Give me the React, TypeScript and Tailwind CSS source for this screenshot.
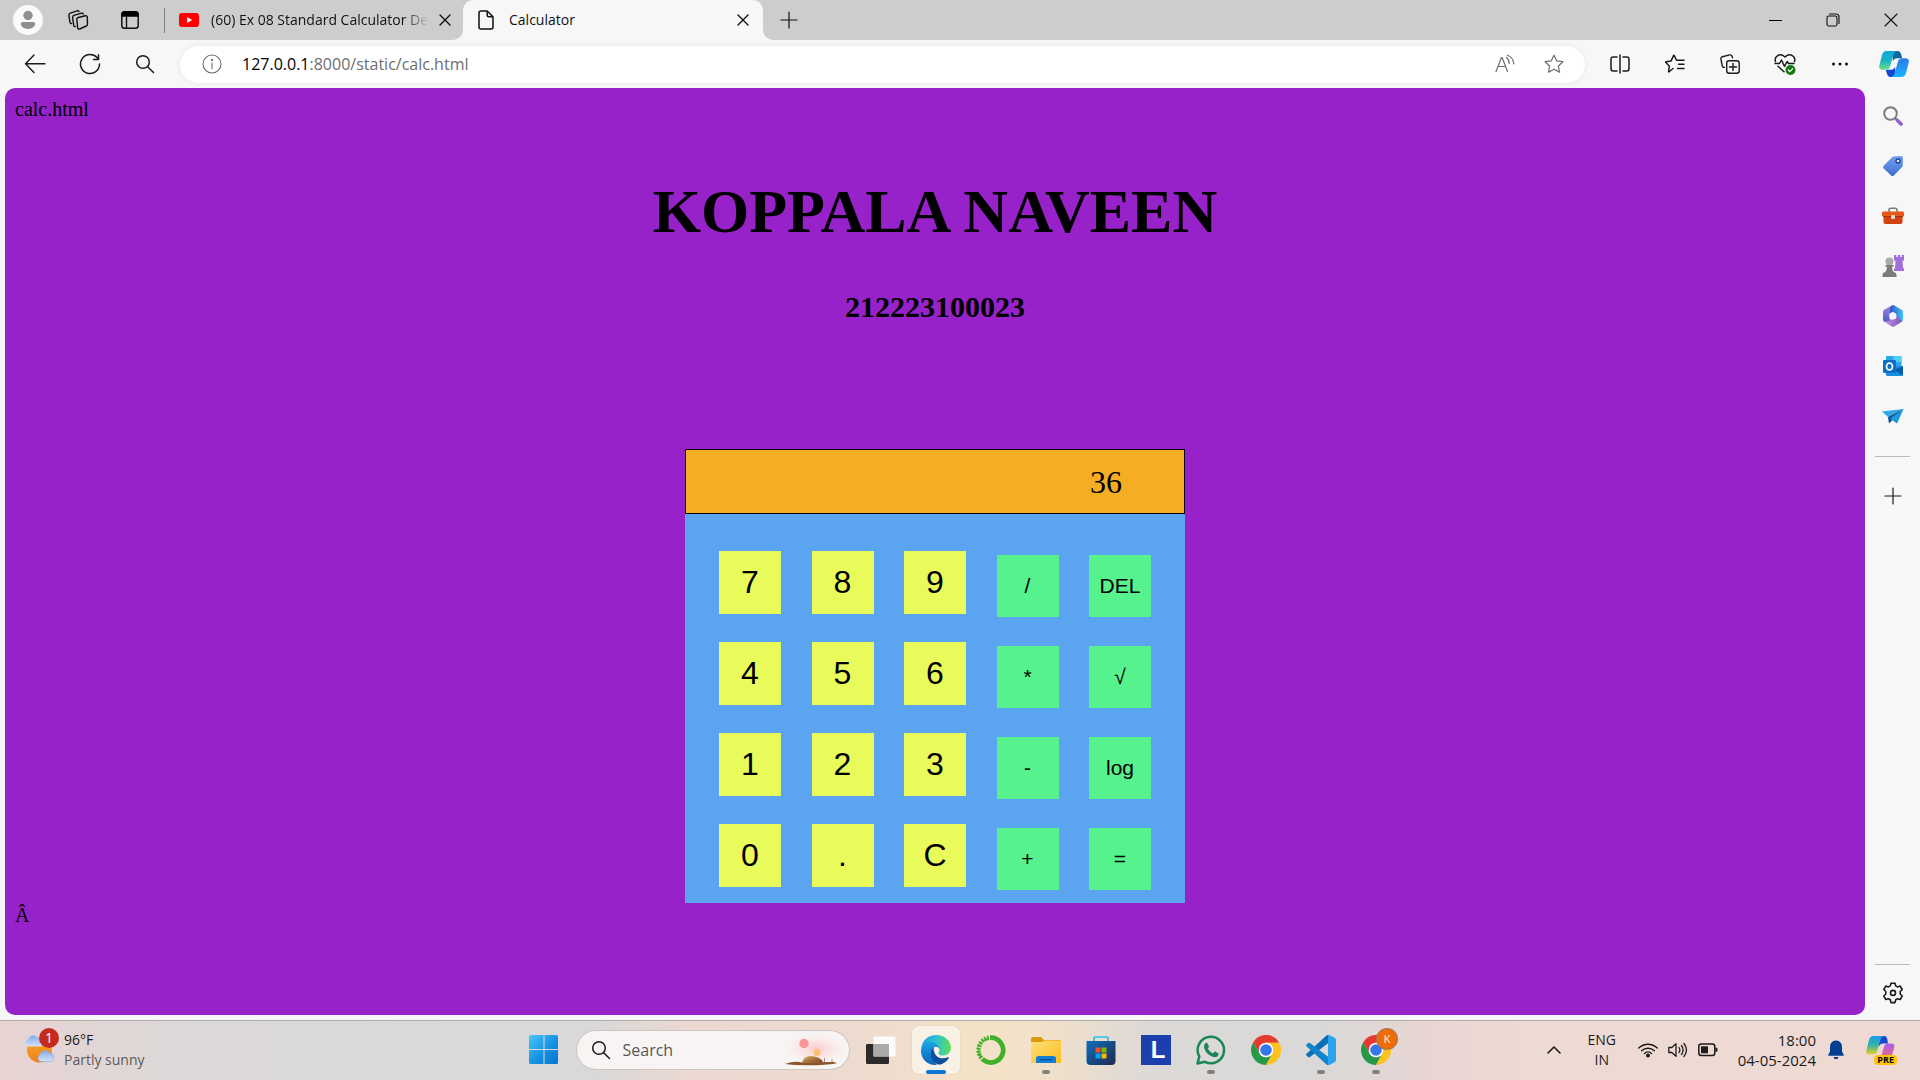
import type { ReactNode } from "react";

const line = {
  fill: "none",
  stroke: "currentColor",
  strokeLinecap: "round" as const,
  strokeLinejoin: "round" as const,
};

/* ---------- Browser icons ---------- */

const Avatar = () => (
  <svg className="h-[30px] w-[30px]" viewBox="0 0 30 30">
    <circle cx="15" cy="15" r="15" fill="#fafafa" />
    <circle cx="15" cy="10.5" r="4.7" fill="#8f8f8f" />
    <path d="M9.500 17h11q1.700 0 1.700 1.600c0 3.200-3.200 5.400-7.200 5.400s-7.200-2.200-7.200-5.400Q7.800 17 9.500 17z" fill="#8f8f8f" />
  </svg>
);

const Workspaces = () => (
  <svg className="h-[22px] w-[22px]" viewBox="0 0 22 22" {...line} strokeWidth="1.400">
    <path d="M10.500 8.800 18.300 6.800q1.900-.4 2 1.400l.2 7q0 1.300-1.200 1.800l-6.600 3q-1.700.6-2-1.100l-.9-8q-.1-1.600.7-2.100z" />
    <path d="M8.200 17.500q-1.200.3-1.500-1.100L5.600 8.600q-.1-1.700 1.300-2.200l7.500-2.200q1.500-.3 1.900.9" />
    <path d="M4.500 14.500q-1.200.2-1.500-1.100L1.900 6.300q-.1-1.700 1.300-2.200l7-2.200q1.300-.3 1.800.6" />
  </svg>
);

const TabActions = () => (
  <svg className="h-5 w-5" viewBox="0 0 20 20">
    <rect x="1.800" y="1.800" width="16.400" height="16.400" rx="2.800" fill="none" stroke="#111" strokeWidth="1.500" />
    <path d="M1.500 6.800V4A2.800 2.800 0 0 1 4.300 1.200h11.400A2.800 2.800 0 0 1 18.500 4v2.800z" fill="#000" />
    <path d="M6.500 6v12" stroke="#111" strokeWidth="1.400" />
  </svg>
);

const YouTube = () => (
  <svg className="h-[14px] w-5" viewBox="0 0 20 14">
    <rect width="20" height="14" rx="3.200" fill="#f00" />
    <path d="M8 4v6l5.200-3z" fill="#fff" />
  </svg>
);

const Cross = () => (
  <svg className="h-3 w-3" viewBox="0 0 12 12" {...line} strokeWidth="1.400">
    <path d="m1 1 10 10M11 1 1 11" />
  </svg>
);

const Doc = () => (
  <svg className="h-5 w-4" viewBox="0 0 16 20" {...line} strokeWidth="1.500">
    <path d="M2.800 1h6.400l5.800 5.800V17q0 2-2 2H3q-2 0-2-2V3q0-2 1.800-2zM9.200 1v4.300q0 1.500 1.500 1.500H15" />
  </svg>
);

const Plus = () => (
  <svg className="h-[18px] w-[18px]" viewBox="0 0 18 18" {...line} strokeWidth="1.200">
    <path d="M9 1v16M1 9h16" />
  </svg>
);

const Minimize = () => (
  <svg className="h-[14px] w-[14px]" viewBox="0 0 14 14" stroke="#000" strokeWidth="1">
    <path d="M0 7.500h13" />
  </svg>
);

const Restore = () => (
  <svg className="h-[14px] w-[14px]" viewBox="0 0 14 14" {...line} strokeWidth="1.100">
    <rect x="1" y="3" width="10" height="10" rx="1.800" />
    <path d="M3.500 1h6.500q3 0 3 3v6.500" />
  </svg>
);

const CloseWindow = () => (
  <svg className="h-[14px] w-[14px]" viewBox="0 0 14 14" {...line} strokeWidth="1.100">
    <path d="m1 1 12 12M13 1 1 13" />
  </svg>
);

const Back = () => (
  <svg className="h-[22px] w-[22px]" viewBox="0 0 22 22" {...line} strokeWidth="1.400">
    <path d="M10 2 1.500 10.700 10 19.500M1.500 10.700H21" />
  </svg>
);

const Reload = () => (
  <svg className="h-[22px] w-[22px]" viewBox="0 0 22 22" {...line} strokeWidth="1.500">
    <path d="M20.500 11A9.500 9.500 0 1 1 18 4.600l1.200 1.500M19.500 1.800V6.600h-5" />
  </svg>
);

const Magnifier = () => (
  <svg className="h-5 w-5" viewBox="0 0 20 20" {...line} strokeWidth="1.500">
    <circle cx="8" cy="8" r="6.300" />
    <path d="m12.700 12.700 5.800 5.800" />
  </svg>
);

const Info = () => (
  <svg className="h-5 w-5" viewBox="0 0 20 20" {...line} strokeWidth="1.100">
    <circle cx="10" cy="10" r="9" />
    <path d="M10 9v5.500" />
    <circle cx="10" cy="6" r=".6" fill="currentColor" />
  </svg>
);

const ReadAloud = () => (
  <svg className="h-5 w-5" viewBox="0 0 20 20" {...line} strokeWidth="1.200">
    <path d="m1 17.500 5.500-14h.6l5.400 14M3 12.500h7.500M11.500 3.500q2.700 2 2.800 6M12.500 1.200q5.800 2.300 6.300 8.600" />
  </svg>
);

const Star = () => (
  <svg className="h-5 w-5" viewBox="0 0 20 20" {...line} strokeWidth="1.200">
    <path d="m10 1.200 2.700 5.600 6.200.9-4.500 4.300 1.100 6.100L10 15.200l-5.500 2.900 1.100-6.100L1.100 7.700l6.200-.9z" />
  </svg>
);

const Split = () => (
  <svg className="h-5 w-5" viewBox="0 0 20 20" {...line} strokeWidth="1.500">
    <path d="M7 3H3.200Q1 3 1 5.200v9.600Q1 17 3.200 17H7M13 3h3.800Q19 3 19 5.200v9.600Q19 17 16.800 17H13M10 1v18" />
  </svg>
);

const Favorites = () => (
  <svg className="h-5 w-5" viewBox="0 0 20 20" {...line} strokeWidth="1.500">
    <path d="M8 14.500 3.800 18q-.3 0-.3-.4l.9-5.400-3.700-3.900q-.2-.5.300-.6l5.100-.8L8.500 1.600q.4-.6.800 0L11.500 6.300H19M13.500 10.300H19M12.500 14.500H19" />
  </svg>
);

const Collections = () => (
  <svg className="h-5 w-5" viewBox="0 0 20 20" {...line} strokeWidth="1.400">
    <rect x="6.700" y="6.700" width="12.500" height="12.500" rx="2.500" />
    <path d="M13 9.500v7M9.500 13h7M4.300 13.500q-1.700-.2-2-1.500L.9 5.200Q.6 3.300 2.400 2.700L9.600.9q1.800-.3 2.500 1.300l.4 1.500" />
  </svg>
);

const Health = () => (
  <svg className="h-[22px] w-[22px]" viewBox="0 0 22 22" {...line} strokeWidth="1.500">
    <path d="M1.500 8.500C0 4 5.500-1 11 4c5.500-5 11 0 9.500 4.500M1 10.500h4.500l2-3.500 3 6.500 2.500-5 1.500 2H20M4 13.200l6 5.500" />
    <circle cx="16.500" cy="17" r="5" fill="#107c10" stroke="none" />
    <path d="m14.300 17 1.600 1.600 2.800-3" stroke="#fff" strokeWidth="1.200" />
  </svg>
);

const Dots = () => (
  <svg className="h-5 w-5" viewBox="0 0 20 20" fill="#111">
    <circle cx="3.500" cy="10" r="1.500" />
    <circle cx="10" cy="10" r="1.500" />
    <circle cx="16.500" cy="10" r="1.500" />
  </svg>
);

const Copilot = () => (
  <svg className="h-[30px] w-[30px]" viewBox="0 0 30 30">
    <defs>
      <linearGradient id="cpA" x1="0" y1="0" x2="0" y2="1">
        <stop offset="0" stopColor="#12a7dd" />
        <stop offset=".5" stopColor="#19b3c4" />
        <stop offset="1" stopColor="#6be08a" />
      </linearGradient>
      <linearGradient id="cpB" x1="0" y1="0" x2="0" y2="1">
        <stop offset="0" stopColor="#2b79e8" />
        <stop offset="1" stopColor="#19b4ff" />
      </linearGradient>
    </defs>
    <path d="M13 2h5.500q2.700 0 3.500 3l1.200 4.200H18q-3 0-4 3z" fill="#0b6a9c" />
    <path d="M17 28h-5.500Q9 28 8 25l-1.200-4.200H12q3 0 4-3z" fill="#1447d4" />
    <path d="M7.500 2H18q-2.500.3-3.300 3l-3.700 12.500q-1 3.300-4.500 3.300H3.500Q-.5 20.800.3 16.500L3 6Q4.200 2 7.500 2z" fill="url(#cpA)" />
    <path d="M22.500 28H12q2.500-.3 3.300-3L19 12.500q1-3.300 4.500-3.300h3q4 0 3.200 4.300L27 24q-1.200 4-4.500 4z" fill="url(#cpB)" />
  </svg>
);

/* ---------- Sidebar icons ---------- */

const SideSearch = () => (
  <svg className="h-5 w-5" viewBox="0 0 20 20" fill="none">
    <circle cx="7.500" cy="7.500" r="6.300" stroke="#7c7c7c" strokeWidth="2" />
    <path d="m12 12 2 2" stroke="#777" strokeWidth="2" />
    <path d="m14.500 14.500 3.500 3.500" stroke="#9461cf" strokeWidth="3.600" strokeLinecap="round" />
  </svg>
);

const Tag = () => (
  <svg className="h-5 w-5" viewBox="0 0 20 20">
    <defs>
      <linearGradient id="tag" x1="0" y1="0" x2="0" y2="1">
        <stop offset="0" stopColor="#71a0f0" />
        <stop offset="1" stopColor="#3f6fcf" />
      </linearGradient>
    </defs>
    <path d="M10.500.5 18 0q2 0 2 2l-.3 7.500q0 1-.8 1.700l-8 8.200q-1.400 1.200-2.800 0L.7 12.500q-1.200-1.400 0-2.700L9 1.200q.7-.7 1.500-.7z" fill="url(#tag)" />
    <circle cx="15" cy="5" r="2" fill="#dfe9ff" stroke="#24418f" strokeWidth="1.300" />
  </svg>
);

const Toolbox = () => (
  <svg className="h-[18px] w-[22px]" viewBox="0 0 22 18">
    <path d="M7 5V3q0-1.700 1.700-1.700h4.600Q15 1.300 15 3v2" fill="none" stroke="#7b7b7b" strokeWidth="1.600" />
    <path d="M1.500 9h19v6q0 2-2 2h-15q-2 0-2-2z" fill="#d3430f" />
    <rect y="4.500" width="22" height="5" rx="1.200" fill="#e8571b" />
    <path d="M1 9.500h20" stroke="#a6320a" />
    <rect x="9" y="8" width="4" height="4" rx="1" fill="#d9d9d9" />
  </svg>
);

const Chess = () => (
  <svg className="h-[22px] w-[22px]" viewBox="0 0 22 22">
    <path d="M12 0h2.300v2h1.600V0h2.300v2h1.500V0H22v5l-1.500 1.500.6 6.500.9 1v2H12v-2l1-1 .6-6.500L12 5z" fill="#a270dc" />
    <circle cx="7.500" cy="6.500" r="4" fill="#a9a9a9" />
    <path d="M3.500 10h8v1.800H10q0 3.700 1.800 5.200Q14.500 17.500 14.500 20v2H.5v-2q0-2.500 2.700-3Q5 15.500 5 11.800H3.500z" fill="#7c7c7c" />
  </svg>
);

const M365 = () => (
  <svg className="h-[22px] w-5" viewBox="0 0 20 22">
    <defs>
      <linearGradient id="mA" x1="0" y1="0" x2="0" y2="1">
        <stop offset="0" stopColor="#a77be0" />
        <stop offset="1" stopColor="#4560c9" />
      </linearGradient>
      <linearGradient id="mB">
        <stop offset="0" stopColor="#2b50c4" />
        <stop offset="1" stopColor="#42c3f3" />
      </linearGradient>
      <linearGradient id="mC">
        <stop offset="0" stopColor="#c492e8" />
        <stop offset="1" stopColor="#7f54b0" />
      </linearGradient>
    </defs>
    <path d="M0 7q0-1.500 1.300-2.300L8 .7Q6.500 2 6.500 4v9q0 1 .8 1.500l1.500 1-5.500 2L1 16.500Q0 16 0 14.500z" fill="url(#mA)" />
    <path d="M8.700.4q1.300-.7 2.600 0l7.400 4.300Q20 5.500 20 7v7.500q0 1.400-1 2L13 13V9L10 7 6.500 8.500V4q0-2.200 2.200-3.600z" fill="url(#mB)" />
    <path d="M1.500 16.700 7 15.500l6.500-4 5.800 4.500-.6.700-7.400 4.700q-1.300.8-2.600 0z" fill="url(#mC)" />
    <circle cx="10" cy="11" r="3.500" fill="#f6f4fb" />
  </svg>
);

const Outlook = () => (
  <svg className="h-5 w-5" viewBox="0 0 20 20">
    <path d="M4 0h13q1.500 0 1.500 1.500V12H3V1q0-1 1-1z" fill="#28a8ea" />
    <path d="M10.500 0H17q1.500 0 1.500 1.500V6h-8z" fill="#50d0f5" />
    <path d="M3 10h17v8.500q0 1.500-1.500 1.500h-14Q3 20 3 18.500z" fill="#1490df" />
    <path d="M20 10v9.500L11 14z" fill="#0a5ea8" />
    <rect y="4" width="13" height="13" rx="1.300" fill="#0f6cc4" />
    <ellipse cx="6.500" cy="10.500" rx="3" ry="3.500" fill="none" stroke="#fff" strokeWidth="1.700" />
  </svg>
);

const Plane = () => (
  <svg className="h-4 w-[22px]" viewBox="0 0 22 16">
    <path d="M0 3.500 21.500 1 6 9z" fill="#2ea8e8" />
    <path d="M6 9 21.500 1 7 15.500z" fill="#0b4f8c" />
    <path d="M8 10.500 21.500 1 15 15.500z" fill="#1d97de" />
  </svg>
);

const Gear = () => (
  <svg className="h-[22px] w-[22px]" viewBox="0 0 22 22" {...line} strokeWidth="1.600">
    <path d="M9 1.200h4l.7 2.700 1.800 1 2.700-.8 2 3.400-2 2V12l2 2-2 3.500-2.700-.8-1.800 1-.7 2.900H9l-.7-2.900-1.800-1-2.700.8-2-3.500 2-2V9.500l-2-2 2-3.400 2.700.8 1.800-1z" />
    <circle cx="11" cy="10.900" r="2.500" />
  </svg>
);

/* ---------- Taskbar icons ---------- */

const Weather = () => (
  <svg className="h-9 w-9" viewBox="0 4 36 36">
    <defs>
      <linearGradient id="sun" x1="0" y1="0" x2="0" y2="1">
        <stop offset="0" stopColor="#f7ad2a" />
        <stop offset="1" stopColor="#f07c1c" />
      </linearGradient>
      <linearGradient id="cloud" x1="0" y1="0" x2="0" y2="1">
        <stop offset="0" stopColor="#86abea" />
        <stop offset="1" stopColor="#d3e2f8" />
      </linearGradient>
    </defs>
    <circle cx="15.500" cy="22" r="12.500" fill="url(#sun)" />
    <path d="M4 18.500a4 4 0 0 1 .3-7.500 5.500 5.500 0 0 1 9.700-1 5 5 0 0 1 3.500 8.500z" fill="url(#cloud)" />
    <path d="M16 33.500a4 4 0 0 1 0-7 5.500 5.500 0 0 1 9.700-1.500 4.500 4.500 0 0 1 1.800 8.500z" fill="url(#cloud)" stroke="#86a8e0" strokeWidth=".6" />
  </svg>
);

const Windows = () => (
  <svg className="h-[30px] w-[30px]" viewBox="0 0 30 30">
    <defs>
      <linearGradient id="win" gradientUnits="userSpaceOnUse" x1="0" y1="0" x2="30" y2="30">
        <stop offset="0" stopColor="#4cc8f7" />
        <stop offset=".55" stopColor="#1390e0" />
        <stop offset="1" stopColor="#0873cf" />
      </linearGradient>
    </defs>
    <path d="M1.500 0h13v14H0V1.500Q0 0 1.500 0zM15.500 0h12Q29 0 29 1.500V14H15.500zM0 15h14.500v14h-13Q0 29 0 27.500zM15.500 15H29v12.500q0 1.500-1.500 1.500h-12z" fill="url(#win)" />
  </svg>
);

const DesertScene = () => (
  <svg className="h-8 w-[62px]" viewBox="0 0 62 32">
    <defs>
      <radialGradient id="glow">
        <stop offset="0" stopColor="#fbc9c9" />
        <stop offset="1" stopColor="#fbe4e0" stopOpacity="0" />
      </radialGradient>
      <linearGradient id="dune" x1="0" y1="0" x2="1" y2="1">
        <stop offset="0" stopColor="#e2b265" />
        <stop offset="1" stopColor="#6e3c1c" />
      </linearGradient>
    </defs>
    <ellipse cx="33" cy="15" rx="30" ry="15" fill="url(#glow)" />
    <circle cx="21" cy="9.500" r="4.700" fill="#fc9696" />
    <circle cx="34" cy="18.500" r="3.500" fill="#fcbe72" />
    <path d="M2 30q10-3.500 17-1.500l32-.5 3 1.200q-12 2-28 2T2 30z" fill="#8b5328" />
    <path d="M19 29q1-6 8-7 11 0 13 6.500z" fill="url(#dune)" />
    <path d="M41.500 24v4M49 25v3" stroke="#a98e83" />
  </svg>
);

const TaskView = () => (
  <svg className="h-[30px] w-[30px]" viewBox="0 0 30 30">
    <rect x="0" y="9" width="23" height="20" rx="1.200" fill="#2b2b2b" />
    <rect x="7.500" y="1.500" width="22" height="20" rx="1.200" fill="#fff" fillOpacity=".88" />
    <path d="M7.500 9H23v12.500H7.500z" fill="#aaa" />
  </svg>
);

const EdgeLogo = () => (
  <svg className="h-[30px] w-[30px]" viewBox="0 0 30 30">
    <defs>
      <linearGradient id="eA">
        <stop offset="0" stopColor="#1c9fe0" />
        <stop offset=".5" stopColor="#2cc3d2" />
        <stop offset="1" stopColor="#62e052" />
      </linearGradient>
      <linearGradient id="eB" x1="0" y1="0" x2="0" y2="1">
        <stop offset="0" stopColor="#1ba0e2" />
        <stop offset="1" stopColor="#0a66bd" />
      </linearGradient>
    </defs>
    <path d="M.3 13C1.300 5 7.500 0 15 0c9 0 15 6.300 15 12.500 0 5-3.600 8-8 8-3.800 0-5-1.600-4.500-2.700.8-1.500 1.200-2.200.8-3.800C17 8 6 5.500.3 13z" fill="url(#eA)" />
    <path d="M0 15C1 8 7.500 6.500 11.500 7.500c4.500 1 7 4 6.800 6.500-.5-1.300-2-2.500-3.800-2.200-3.500 1-6.500 11 1.500 18-9 1.200-16.500-6-16-14.800z" fill="url(#eB)" />
    <path d="M12.500 12.500C7.500 17 9.500 27.500 18 29.700c4.300-.8 7.500-3 9.700-6.500.3-.9-.4-1.200-1-.9-6.200 2.700-14.200.2-14.200-9.800z" fill="#0d4f9e" />
  </svg>
);

const Anaconda = () => (
  <svg className="h-[30px] w-[30px]" viewBox="0 0 30 30" fill="none" stroke="#43b02a">
    <path d="M14 2.700A12.400 12.400 0 1 1 7 24.700" strokeWidth="4.800" />
    <path d="M7.500 25A12.500 12.500 0 0 1 13 2.700" strokeWidth="4.500" strokeDasharray="1.700 1.300" />
    <path d="M5 22A11 11 0 0 1 12 4" strokeWidth="2" strokeDasharray="2.500 1" />
  </svg>
);

const Folder = () => (
  <svg className="h-[30px] w-[30px]" viewBox="0 0 30 30">
    <defs>
      <linearGradient id="fold" x1="0" y1="0" x2="1" y2="1">
        <stop offset="0" stopColor="#ffe07a" />
        <stop offset="1" stopColor="#fbbc1f" />
      </linearGradient>
    </defs>
    <path d="M0 4q0-2 2-2h8l3 3h15q2 0 2 2v5H0z" fill="#dc9a0a" />
    <path d="M0 7h10.500l3-1.500H28.500Q30 5.500 30 7v21H0z" fill="url(#fold)" />
    <path d="M5 28v-4.500Q5 21 7.500 21h15q2.500 0 2.500 2.500V28z" fill="#157fd6" />
    <path d="M9 24.700h12" stroke="#0a4f93" strokeWidth="1.200" strokeLinecap="round" />
  </svg>
);

const Store = () => (
  <svg className="h-[30px] w-[30px]" viewBox="0 0 30 30">
    <defs>
      <linearGradient id="store" x1="0" y1="0" x2="1" y2="1">
        <stop offset="0" stopColor="#0f6fbd" />
        <stop offset="1" stopColor="#20294d" />
      </linearGradient>
    </defs>
    <path d="M8 6.500V3.200Q8 2 9.200 2h11.600Q22 2 22 3.200v3.300" fill="none" stroke="#29c0ee" strokeWidth="1.700" />
    <path d="M.5 6h29v20q0 4-4 4h-21q-4 0-4-4z" fill="url(#store)" />
    <path d="M9.500 12.500h5v5h-5z" fill="#f25022" />
    <path d="M15.500 12.500h5v5h-5z" fill="#7fba00" />
    <path d="M9.500 18.500h5v5h-5z" fill="#00a4ef" />
    <path d="M15.500 18.500h5v5h-5z" fill="#ffb900" />
  </svg>
);

const LApp = () => (
  <span className="flex h-[30px] w-[30px] items-center justify-center bg-[#1c3fae] pl-1 font-['Liberation_Sans'] text-2xl leading-none font-bold text-white">
    L
  </span>
);

const WhatsApp = () => (
  <svg className="h-[30px] w-[30px]" viewBox="0 0 30 30" fill="none">
    <path d="M1.500 28.500 3.300 21.500A13.200 13.200 0 1 1 8.800 26.800z" stroke="#1b8755" strokeWidth="2.500" strokeLinejoin="round" />
    <path d="M10 7.800q.9-.4 1.400.5l1.500 3q.2.700-1.200 2.300 1.700 3.300 5 4.800l1.700-1.600q.5-.5 1.200-.1l2.700 1.500q.7.500.3 1.500-1.300 2.800-4.300 2.500C12 21 8.200 15.500 8 11.500q0-2.600 2-3.700z" fill="#1b8755" />
  </svg>
);

const Chrome = () => (
  <svg className="h-[30px] w-[30px]" viewBox="0 0 30 30">
    <path d="M15 7.800h13.200A15 15 0 0 0 2 7.500l6.800 11.200z" fill="#e33b2e" />
    <path d="M21.200 18.600 15 30A15 15 0 0 0 28.200 7.800H15z" fill="#fcc31e" />
    <path d="M8.800 18.600A7.200 7.200 0 0 0 21.200 18.600L14.900 30A15 15 0 0 1 2 7.500z" fill="#279847" />
    <circle cx="15" cy="15" r="7.300" fill="#fff" />
    <circle cx="15" cy="15" r="5.800" fill="#3577ea" />
  </svg>
);

const VSCode = () => (
  <svg className="h-[30px] w-[30px]" viewBox="0 0 30 30">
    <path d="M22 0v8.300L4 22q-1 .6-1.800 0L.5 20.500q-.8-1 0-1.800L20.500.5Q21 0 22 0z" fill="#0d6fb8" />
    <path d="M22 30v-8.300L4 8q-1-.6-1.800 0L.5 9.500q-.8 1 0 1.800L20.500 29.500q.5.500 1.500.5z" fill="#0f83cd" />
    <path d="M22 0q.8-.1 1.500.3l5.200 2.500Q30 3.500 30 5v20q0 1.500-1.300 2.200l-5.200 2.500q-.7.400-1.500.3z" fill="#2ba2ee" />
  </svg>
);

const Chevron = () => (
  <svg className="h-[14px] w-[14px]" viewBox="0 0 14 14" {...line} strokeWidth="1.600">
    <path d="m1 10 6-6 6 6" />
  </svg>
);

const Wifi = () => (
  <svg className="h-5 w-5" viewBox="0 0 20 20" {...line} strokeWidth="1.400">
    <path d="M.8 8a13 13 0 0 1 18.400 0M3.700 10.800a9 9 0 0 1 12.600 0M6.500 13.500a5 5 0 0 1 7 0" />
    <circle cx="10" cy="15.500" r="1.300" fill="currentColor" />
  </svg>
);

const Speaker = () => (
  <svg className="h-5 w-5" viewBox="0 0 20 20" {...line} strokeWidth="1.300">
    <path d="M.8 7.500h3L8 3.700v12.600l-4.200-3.800h-3zM11 7.500q1.700 2.500 0 5M13.500 5.500q3.300 4.500 0 9M16 3.500q5 6.500 0 13" />
  </svg>
);

const Battery = () => (
  <svg className="h-5 w-5" viewBox="0 0 20 20">
    <rect x=".8" y="4" width="16" height="11.500" rx="2.500" fill="none" stroke="#1b1b1b" strokeWidth="1.500" />
    <rect x="3" y="6.300" width="7" height="7" fill="#1b1b1b" />
    <path d="M17.500 7.500q2.200 0 2.200 2.200t-2.200 2.200z" fill="#1b1b1b" />
  </svg>
);

const Bell = () => (
  <svg className="h-5 w-4" viewBox="0 0 16 20" fill="#023f92">
    <path d="M8 .5q6 .5 6 6.500v4.500l1.800 3.500q.2.800-.6.800H.8q-.8 0-.6-.8L2 11.500V7Q2 1 8 .5zM5.500 17h5Q10 19.300 8 19.300T5.500 17z" />
  </svg>
);

const CopilotPre = () => (
  <svg className="h-[30px] w-[30px]" viewBox="0 0 30 30">
    <defs>
      <linearGradient id="prA" x1="0" y1="0" x2="0" y2="1">
        <stop offset="0" stopColor="#189bf0" />
        <stop offset=".5" stopColor="#34b4a5" />
        <stop offset="1" stopColor="#f0cc20" />
      </linearGradient>
      <linearGradient id="prB" x1="0" y1="0" x2="0" y2="1">
        <stop offset="0" stopColor="#a95df0" />
        <stop offset="1" stopColor="#f76a78" />
      </linearGradient>
    </defs>
    <path d="M13 1h5q2.500 0 3.300 3L22 8.500h-5q-3 0-4 3z" fill="#1748cf" />
    <path d="M7.500 1H18q-2.500.3-3.300 3L11 16.500q-1 3-4.500 3h-3q-4 0-3.200-4L3 5q1.200-4 4.500-4z" fill="url(#prA)" />
    <path d="M22.500 24H12q2.500-.3 3.300-3L18 11.500q1-3 4.500-3h3q3.500 0 2.700 4L26 20z" fill="url(#prB)" />
  </svg>
);

/* ---------- Shared pieces ---------- */

type CellProps = { label: string; className?: string; children: ReactNode };

const Cell = ({ label, className = "w-[55px]", children }: CellProps) => (
  <button type="button" aria-label={label} className={`flex shrink-0 items-center justify-center ${className}`}>
    {children}
  </button>
);

/* ---------- Browser chrome ---------- */

const TabStrip = () => (
  <header className="flex h-10 shrink-0 bg-[#f7f7f7] text-[#111]">
    <div className="flex rounded-br-[10px] bg-[#cdcdcd]">
      <Cell label="Profile" className="w-14"><Avatar /></Cell>
      <Cell label="Workspaces" className="w-11"><Workspaces /></Cell>
      <Cell label="Tab actions" className="w-[60px]"><TabActions /></Cell>
      <div className="mx-1 h-[25px] w-px self-center bg-[#7d7d7d]" />
      <div className="flex w-[294px] shrink-0 items-center pl-[10px]">
        <YouTube />
        <span className="ml-3 w-[218px] whitespace-nowrap text-sm [mask-image:linear-gradient(to_right,black_88%,transparent)]">
          (60) Ex 08 Standard Calculator De
        </span>
        <Cell label="Close tab" className="w-8"><Cross /></Cell>
      </div>
    </div>
    <div className="w-[300px] shrink-0 bg-[#cdcdcd]">
      <div className="flex h-full items-center rounded-t-[10px] bg-[#f7f7f7] pl-[15px]">
        <Doc />
        <span className="ml-[15px] flex-1 text-sm">Calculator</span>
        <Cell label="Close tab" className="w-10"><Cross /></Cell>
      </div>
    </div>
    <div className="flex flex-1 rounded-bl-[10px] bg-[#cdcdcd]">
      <Cell label="New tab" className="w-[52px]"><Plus /></Cell>
      <Cell label="Minimize" className="ml-auto w-[57px]"><Minimize /></Cell>
      <Cell label="Restore" className="w-[58px]"><Restore /></Cell>
      <Cell label="Close" className="w-[58px]"><CloseWindow /></Cell>
    </div>
  </header>
);

const Toolbar = () => (
  <nav className="flex h-12 shrink-0 items-center bg-[#f7f7f7] pl-[7px] text-[#1b1b1b]">
    <Cell label="Back"><Back /></Cell>
    <Cell label="Refresh"><Reload /></Cell>
    <Cell label="Search"><Magnifier /></Cell>
    <div className="mr-[7px] ml-2 flex h-[37px] flex-1 items-center rounded-full bg-white pr-[7px] pl-[22px] text-[#6e6e6e] shadow-[0_0_4px_#e3e3e3]">
      <Info />
      <a href="#page" className="ml-5 flex-1 text-base leading-6">
        <span className="text-black">127.0.0.1</span>:8000/static/calc.html
      </a>
      <Cell label="Read aloud" className="w-[50px]"><ReadAloud /></Cell>
      <Cell label="Add to favorites" className="w-12"><Star /></Cell>
    </div>
    <Cell label="Split screen"><Split /></Cell>
    <Cell label="Favorites"><Favorites /></Cell>
    <Cell label="Collections"><Collections /></Cell>
    <Cell label="Browser essentials"><Health /></Cell>
    <Cell label="Settings and more"><Dots /></Cell>
    <Cell label="Copilot" className="w-[53px]"><Copilot /></Cell>
  </nav>
);

const Sidebar = () => (
  <aside className="flex w-[55px] shrink-0 flex-col items-center text-[#1b1b1b]">
    <div className="flex flex-col pt-[3px]">
      <Cell label="Search" className="h-[50px] w-[55px]"><SideSearch /></Cell>
      <Cell label="Shopping" className="h-[50px] w-[55px]"><Tag /></Cell>
      <Cell label="Tools" className="h-[50px] w-[55px]"><Toolbox /></Cell>
      <Cell label="Games" className="h-[50px] w-[55px]"><Chess /></Cell>
      <Cell label="Microsoft 365" className="h-[50px] w-[55px]"><M365 /></Cell>
      <Cell label="Outlook" className="h-[50px] w-[55px]"><Outlook /></Cell>
      <Cell label="Drop" className="h-[50px] w-[55px]"><Plane /></Cell>
    </div>
    <div className="mt-[15px] h-px w-[35px] bg-[#b9b9b9]" />
    <Cell label="Customize" className="mt-3 h-[54px] w-[55px]"><Plus /></Cell>
    <div className="mt-auto h-px w-[35px] bg-[#b9b9b9]" />
    <Cell label="Settings" className="h-[55px] w-[55px]"><Gear /></Cell>
  </aside>
);

/* ---------- Calculator page ---------- */

const rows = [
  { digits: ["7", "8", "9"], operators: ["/", "DEL"] },
  { digits: ["4", "5", "6"], operators: ["*", "√"] },
  { digits: ["1", "2", "3"], operators: ["-", "log"] },
  { digits: ["0", ".", "C"], operators: ["+", "="] },
];

const Calculator = () => (
  <section className="mx-auto w-[500px] bg-[#5ba5f0]">
    <output className="flex h-[65px] items-center justify-end border border-black bg-[#f5ae23] pr-[62px] text-[32px]">
      36
    </output>
    <div className="flex flex-col gap-[25px] px-[34px] pt-[37px] pb-[13px] font-['Liberation_Sans',sans-serif]">
      {rows.map((row) => (
        <div key={row.digits[0]} className="flex h-[66px] justify-between">
          {row.digits.map((key) => (
            <button key={key} type="button" className="h-[63px] w-[62px] self-start bg-[#e9fa5b] pb-[2px] text-[32px]">
              {key}
            </button>
          ))}
          {row.operators.map((key) => (
            <button key={key} type="button" className="h-[62px] w-[62px] self-end bg-[#55f28e] text-[21px]">
              {key}
            </button>
          ))}
        </div>
      ))}
    </div>
  </section>
);

const Page = () => (
  <main
    id="page"
    className="mb-[5px] ml-[5px] flex-1 rounded-[10px] bg-[#9722c9] px-[10px] pt-[9px] font-['Liberation_Serif',serif] text-xl leading-6 text-black"
  >
    <p>calc.html</p>
    <h1 className="mt-[54px] text-center text-[62px] leading-[72px] font-bold">KOPPALA NAVEEN</h1>
    <h2 className="mt-[42px] text-center text-[30px] leading-9 font-bold">212223100023</h2>
    <div className="mt-[124px]">
      <Calculator />
    </div>
    <p>Â</p>
  </main>
);

/* ---------- Taskbar ---------- */

type App = { name: string; icon: ReactNode; running?: boolean; active?: boolean; badge?: string };

const apps: App[] = [
  { name: "Task view", icon: <TaskView /> },
  { name: "Microsoft Edge", icon: <EdgeLogo />, active: true },
  { name: "Anaconda", icon: <Anaconda /> },
  { name: "File Explorer", icon: <Folder />, running: true },
  { name: "Microsoft Store", icon: <Store /> },
  { name: "L", icon: <LApp /> },
  { name: "WhatsApp", icon: <WhatsApp />, running: true },
  { name: "Google Chrome", icon: <Chrome /> },
  { name: "Visual Studio Code", icon: <VSCode />, running: true },
  { name: "Google Chrome, profile K", icon: <Chrome />, running: true, badge: "K" },
];

const AppButton = ({ name, icon, running, active, badge }: App) => (
  <div className="flex w-[55px] justify-center">
    <button
      type="button"
      aria-label={name}
      className={`relative flex h-12 w-12 items-center justify-center rounded-md ${active ? "bg-[#faf1e6] shadow-[0_0_1px_#b9a58c]" : ""}`}
    >
      {icon}
      {active && <span className="absolute bottom-0 h-1 w-5 rounded-full bg-[#0a78d4]" />}
      {running && <span className="absolute bottom-0 h-1 w-2 rounded-full bg-[#83807e]" />}
      {badge && (
        <span className="absolute top-[3px] right-[3px] flex h-5 w-5 items-center justify-center rounded-full bg-[#ee6c05] text-[11px] leading-none font-semibold text-[#f8d6b8] ring-1 ring-[#a87850]">
          {badge}
        </span>
      )}
    </button>
  </div>
);

const Taskbar = () => (
  <footer className="grid h-[60px] shrink-0 grid-cols-[1fr_auto_1fr] items-center border-t border-[#b0aaaa] bg-[linear-gradient(to_right,#e8d3d2_0%,#dcd9d8_9%,#d9d9d9_31%,#ecd8d1_36%,#eedccf_46%,#f5e3c8_50%,#f3e1c9_54%,#dcd9d7_60%,#dad9d8_69%,#ead5d3_75%,#eedad4_79%,#eedad3_100%)] pb-[2px] text-[#1b1b1b]">
    <button type="button" className="flex items-center pl-6 text-left">
      <span className="relative">
        <Weather />
        <span className="absolute -top-1 left-[15px] flex h-5 w-5 items-center justify-center rounded-full bg-[#c42b1c] text-sm leading-none text-white">
          1
        </span>
      </span>
      <span className="ml-1 flex flex-col text-sm leading-5">
        <span>96°F</span>
        <span className="text-[#5d5a5a]">Partly sunny</span>
      </span>
    </button>

    <div className="flex items-center">
      <Cell label="Start"><Windows /></Cell>
      <label className="mx-[5px] flex h-[38px] w-[272px] items-center rounded-full bg-[#f7f4f3] pr-1 pl-[14px] ring-1 ring-[#cfc6c2]">
        <Magnifier />
        <input
          type="text"
          aria-label="Search"
          placeholder="Search"
          className="ml-3 min-w-0 flex-1 bg-transparent text-base placeholder:text-[#5a5654]"
        />
        <DesertScene />
      </label>
      {apps.map((app) => (
        <AppButton key={app.name} {...app} />
      ))}
    </div>

    <div className="flex items-center justify-end">
      <Cell label="Show hidden icons" className="w-10"><Chevron /></Cell>
      <button type="button" className="w-14 text-center text-sm leading-5">
        ENG
        <br />
        IN
      </button>
      <button type="button" aria-label="Network, sound and battery" className="ml-2 flex items-center gap-[10px]">
        <Wifi />
        <Speaker />
        <Battery />
      </button>
      <button type="button" className="ml-5 text-right text-[15px] leading-5">
        18:00
        <br />
        04-05-2024
      </button>
      <Cell label="Notifications" className="w-10"><Bell /></Cell>
      <button type="button" aria-label="Copilot preview" className="relative mr-6 ml-[10px]">
        <CopilotPre />
        <span className="absolute -right-px bottom-0 flex h-[10px] items-center rounded-sm bg-[#fcc50c] px-[3px] text-[9px] leading-none font-bold text-black">
          PRE
        </span>
      </button>
    </div>
  </footer>
);

export default function App() {
  return (
    <div className="flex min-h-screen flex-col bg-[#f7f7f7] font-['Open_Sans',sans-serif]">
      <TabStrip />
      <Toolbar />
      <div className="flex flex-1">
        <Page />
        <Sidebar />
      </div>
      <Taskbar />
    </div>
  );
}
